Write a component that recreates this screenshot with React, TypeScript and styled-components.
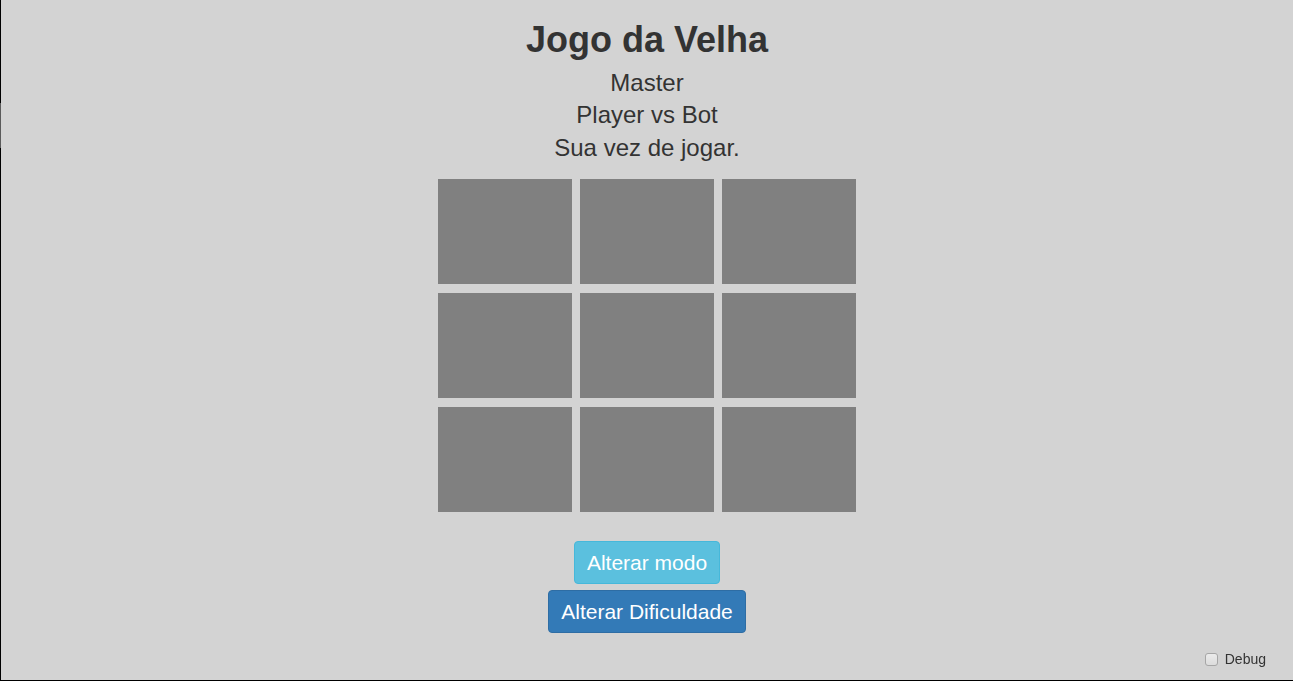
import React from "react";
import styled, { createGlobalStyle } from "styled-components";

const GlobalStyle = createGlobalStyle`
  html, body {
    margin: 0;
    padding: 0;
    height: 100%;
  }
  body {
    background: #d3d3d3;
    font-family: "Liberation Sans", Arial, Helvetica, sans-serif;
    color: #333;
  }
  *, *::before, *::after { box-sizing: border-box; }
`;

const Frame = styled.div`
  position: relative;
  min-height: 100vh;
  border-left: 1px solid #000;
  border-bottom: 1px solid #000;
  display: flex;
  flex-direction: column;
  align-items: center;
  &::before {
    content: "";
    position: absolute;
    left: -1px;
    top: 103px;
    width: 1px;
    height: 45px;
    background: #5a5a5a;
  }
`;

const Title = styled.h1`
  margin: 20px 0 0;
  font-size: 36px;
  line-height: 39.6px;
  font-weight: 700;
  color: #333;
`;

const Info = styled.div`
  margin-top: 7px;
  display: flex;
  flex-direction: column;
  align-items: center;
`;

const InfoLine = styled.div`
  font-size: 24px;
  line-height: 32.5px;
  color: #333;
`;

const Board = styled.div`
  margin-top: 15px;
  display: grid;
  grid-template-columns: repeat(3, 134px);
  grid-auto-rows: 105px;
  column-gap: 8px;
  row-gap: 9px;
`;

const Cell = styled.div`
  background: #808080;
  cursor: pointer;
`;

const Actions = styled.div`
  margin-top: 29px;
  display: flex;
  flex-direction: column;
  align-items: center;
  gap: 6px;
`;

const Button = styled.button<{ $variant: "info" | "primary" }>`
  font-family: "Liberation Sans", Arial, Helvetica, sans-serif;
  font-size: 21px;
  line-height: 29px;
  padding: 6px 12px;
  border-radius: 4px;
  color: #fff;
  cursor: pointer;
  background: ${(p) => (p.$variant === "info" ? "#5bc0de" : "#337ab7")};
  border: 1px solid ${(p) => (p.$variant === "info" ? "#46b8da" : "#2e6da4")};
`;

const DebugLabel = styled.label`
  position: fixed;
  right: 27px;
  bottom: 12px;
  display: flex;
  align-items: center;
  gap: 7px;
  font-size: 14px;
  line-height: 20px;
  color: #333;
`;

const Check = styled.input`
  appearance: none;
  -webkit-appearance: none;
  margin: 0;
  width: 13px;
  height: 13px;
  border: 1px solid #a6a6a6;
  border-radius: 3px;
  background: linear-gradient(#ebebeb, #dcdcdc);
`;

export default function App() {
  const cells = Array.from({ length: 9 }, (_, i) => i);
  return (
    <>
      <GlobalStyle />
      <Frame>
        <Title>Jogo da Velha</Title>
        <Info>
          <InfoLine>Master</InfoLine>
          <InfoLine>Player vs Bot</InfoLine>
          <InfoLine>Sua vez de jogar.</InfoLine>
        </Info>
        <Board>
          {cells.map((i) => (
            <Cell key={i} />
          ))}
        </Board>
        <Actions>
          <Button $variant="info">Alterar modo</Button>
          <Button $variant="primary">Alterar Dificuldade</Button>
        </Actions>
        <DebugLabel>
          <Check type="checkbox" />
          Debug
        </DebugLabel>
      </Frame>
    </>
  );
}
